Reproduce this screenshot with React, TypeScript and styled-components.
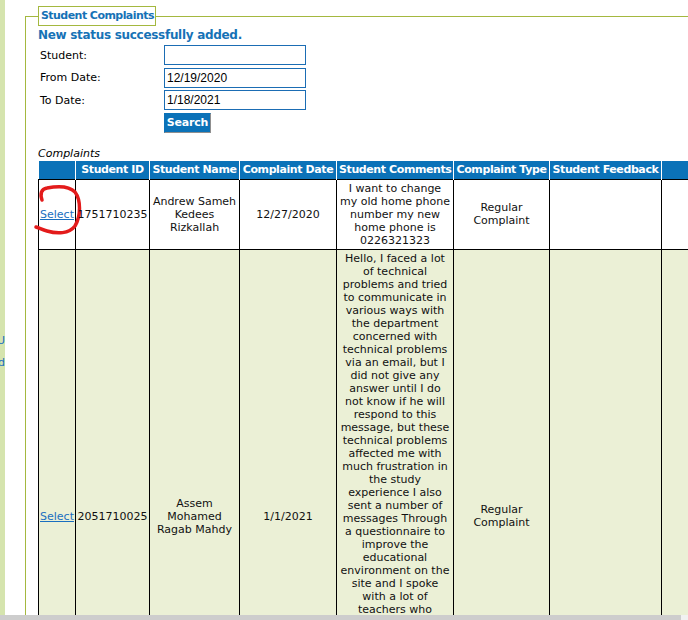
import React from "react";
import styled, { createGlobalStyle } from "styled-components";

const GlobalStyle = createGlobalStyle`
  html, body {
    margin: 0;
    padding: 0;
    background: #ffffff;
    overflow: hidden;
  }
  body {
    font-family: "DejaVu Sans", Verdana, sans-serif;
    font-size: 11px;
    color: #000;
  }
`;

const Page = styled.div`
  display: flex;
  min-height: 620px;
`;

const Sidebar = styled.div`
  width: 5px;
  flex-shrink: 0;
  background: #d5e4ae;
  overflow: hidden;
  padding-top: 330px;
`;

const SideLinks = styled.div`
  width: 200px;
  margin-left: -195px;
  text-align: right;
  line-height: 22px;
  a {
    display: block;
    color: #1a6fc0;
    text-decoration: none;
    white-space: nowrap;
  }
`;

const Main = styled.div`
  margin-left: 20px;
  padding-top: 6px;
`;

const Fieldset = styled.fieldset`
  margin: 0;
  padding: 0 12px 20px 12px;
  width: 1000px;
  border: 1px solid #a4b83f;
  border-right: none;
  min-width: 0;
`;

const Legend = styled.legend`
  padding: 2px 1px 2px 2px;
  border: 1px solid #a4b83f;
  color: #1672b6;
  font-weight: bold;
  font-size: 11px;
  letter-spacing: -0.55px;
  line-height: 14px;
`;

const Message = styled.div`
  margin-top: 1px;
  color: #1672b6;
  font-weight: bold;
  font-size: 12px;
  letter-spacing: -0.3px;
  line-height: 16px;
`;

const Form = styled.div`
  display: grid;
  grid-template-columns: 126px 142px;
  row-gap: 2.5px;
  align-items: center;
  margin-top: 2px;
`;

const Label = styled.label`
  padding-left: 2px;
  line-height: 13px;
`;

const Input = styled.input`
  box-sizing: border-box;
  width: 142px;
  height: 20px;
  margin: 0;
  padding: 0 2px;
  border: 1px solid #1b6db4;
  font-family: "Liberation Sans", Arial, sans-serif;
  font-size: 12px;
  color: #000;
  outline: none;
`;

const Button = styled.button`
  grid-column: 2;
  justify-self: start;
  box-sizing: border-box;
  width: 47px;
  height: 20px;
  margin: 0;
  padding: 0;
  background: #0b72b8;
  color: #fff;
  font-family: "DejaVu Sans", Verdana, sans-serif;
  font-weight: bold;
  font-size: 11px;
  letter-spacing: -0.2px;
  border: 1px solid;
  border-color: #0b72b8 #8f8f8f #8f8f8f #0b72b8;
`;

const Caption = styled.div`
  margin-top: 14px;
  font-style: italic;
  line-height: 14px;
`;

const Table = styled.table`
  border-collapse: collapse;
  table-layout: fixed;
  width: 824px;
`;

const Th = styled.th`
  background: #0b72b8;
  color: #fff;
  font-weight: bold;
  letter-spacing: -0.4px;
  white-space: nowrap;
  overflow: hidden;
  height: 18px;
  padding: 0 2px;
  line-height: 14px;
  border-right: 1px solid #fff;
  text-align: center;
`;

const Tr = styled.tr<{ $alt?: boolean }>`
  background: ${(p) => (p.$alt ? "#ebf0d6" : "#ffffff")};
`;

const Td = styled.td<{ $top?: boolean }>`
  position: relative;
  border: 1px solid #000;
  padding: 2px 1px;
  text-align: center;
  vertical-align: ${(p) => (p.$top ? "top" : "middle")};
  line-height: 13px;
  white-space: nowrap;
  color: #111;
`;

const SelectLink = styled.a`
  color: #1a6fc0;
  text-decoration: underline;
  cursor: pointer;
`;

const Mark = styled.svg`
  position: absolute;
  left: -4px;
  top: 4px;
  overflow: visible;
  pointer-events: none;
`;

const ScrollTrack = styled.div`
  position: fixed;
  left: 0;
  right: 0;
  bottom: 0;
  height: 5px;
  background: #f1f1f1;
`;

const ScrollThumb = styled.div`
  width: 681px;
  height: 100%;
  background: #cdcdcd;
`;

const Lines = ({ lines }: { lines: string[] }) => (
  <>
    {lines.map((l, i) => (
      <div key={i}>{l}</div>
    ))}
  </>
);

const headers = [
  "",
  "Student ID",
  "Student Name",
  "Complaint Date",
  "Student Comments",
  "Complaint Type",
  "Student Feedback",
  "Initial Reply",
];
const widths = [37, 74, 90, 97, 117, 96, 112, 201];

const longComment = [
  "Hello, I faced a lot",
  "of technical",
  "problems and tried",
  "to communicate in",
  "various ways with",
  "the department",
  "concerned with",
  "technical problems",
  "via an email, but I",
  "did not give any",
  "answer until I do",
  "not know if he will",
  "respond to this",
  "message, but these",
  "technical problems",
  "affected me with",
  "much frustration in",
  "the study",
  "experience I also",
  "sent a number of",
  "messages Through",
  "a questionnaire to",
  "improve the",
  "educational",
  "environment on the",
  "site and I spoke",
  "with a lot of",
  "teachers who",
];

export default function App() {
  return (
    <>
      <GlobalStyle />
      <Page>
        <Sidebar>
          <SideLinks>
            <a>MENU</a>
            <a>Change Password</a>
          </SideLinks>
        </Sidebar>
        <Main>
          <Fieldset>
            <Legend>Student Complaints</Legend>
            <Message>New status successfully added.</Message>
            <Form>
              <Label>Student:</Label>
              <Input defaultValue="" />
              <Label>From Date:</Label>
              <Input defaultValue="12/19/2020" />
              <Label>To Date:</Label>
              <Input defaultValue="1/18/2021" />
              <Button>Search</Button>
            </Form>
            <Caption>Complaints</Caption>
            <Table>
              <colgroup>
                {widths.map((w, i) => (
                  <col key={i} style={{ width: w }} />
                ))}
              </colgroup>
              <thead>
                <tr>
                  {headers.map((h, i) => (
                    <Th key={i}>{h}</Th>
                  ))}
                </tr>
              </thead>
              <tbody>
                <Tr>
                  <Td>
                    <SelectLink>Select</SelectLink>
                    <Mark width="50" height="54" viewBox="0 0 50 54">
                      <path
                        d="M7 16 C5 10,6 5,12 4 C22 2,34 2,40 8 C46 16,46 32,40 42 C34 50,22 50,12 47 C8 46,4 44,1 43"
                        fill="none"
                        stroke="#e31b1b"
                        strokeWidth="3.5"
                        strokeLinecap="round"
                      />
                    </Mark>
                  </Td>
                  <Td>1751710235</Td>
                  <Td>
                    <Lines lines={["Andrew Sameh", "Kedees", "Rizkallah"]} />
                  </Td>
                  <Td>12/27/2020</Td>
                  <Td>
                    <Lines
                      lines={[
                        "I want to change",
                        "my old home phone",
                        "number my new",
                        "home phone is",
                        "0226321323",
                      ]}
                    />
                  </Td>
                  <Td>
                    <Lines lines={["Regular", "Complaint"]} />
                  </Td>
                  <Td />
                  <Td />
                </Tr>
                <Tr $alt style={{ height: 534 }}>
                  <Td>
                    <SelectLink>Select</SelectLink>
                  </Td>
                  <Td>2051710025</Td>
                  <Td>
                    <Lines lines={["Assem", "Mohamed", "Ragab Mahdy"]} />
                  </Td>
                  <Td>1/1/2021</Td>
                  <Td $top>
                    <Lines lines={longComment} />
                  </Td>
                  <Td>
                    <Lines lines={["Regular", "Complaint"]} />
                  </Td>
                  <Td />
                  <Td />
                </Tr>
              </tbody>
            </Table>
          </Fieldset>
        </Main>
      </Page>
      <ScrollTrack>
        <ScrollThumb />
      </ScrollTrack>
    </>
  );
}
